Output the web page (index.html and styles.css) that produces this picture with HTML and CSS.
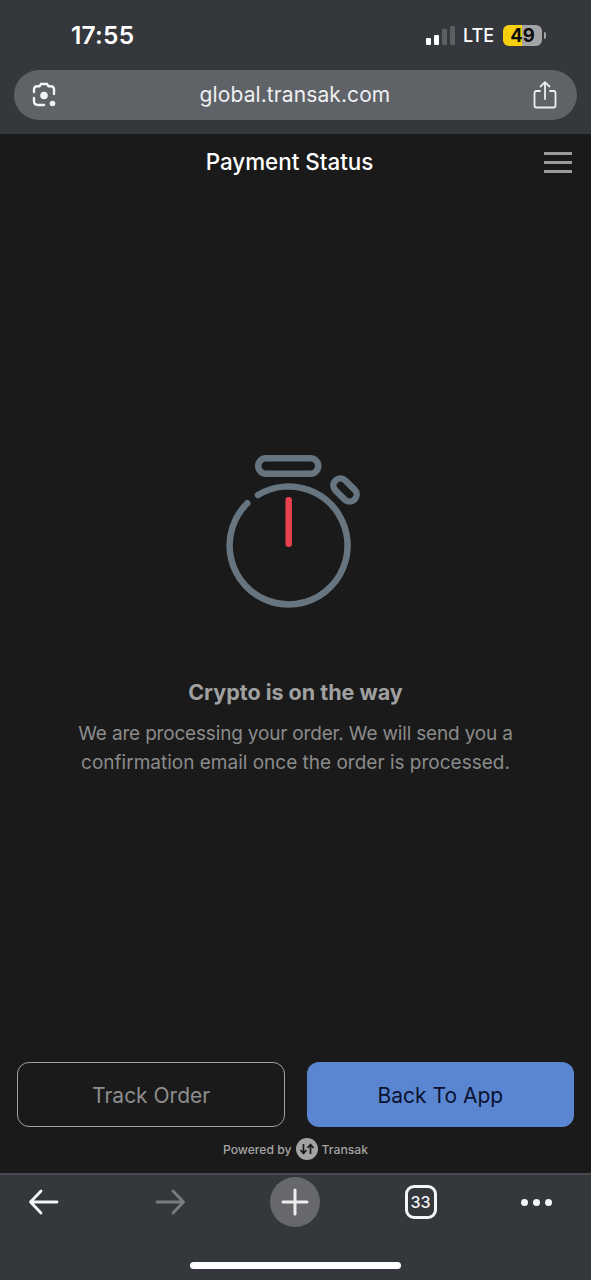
FILE: index.html
```html
<!DOCTYPE html>
<html lang="en">
<head>
  <meta charset="UTF-8">
  <meta name="viewport" content="width=device-width, initial-scale=1.0">
  <title>Payment Status</title>
  <link rel="stylesheet" href="styles.css">
</head>
<body>
  <!-- Phone status bar and browser address bar -->
  <div class="top-chrome">
    <div class="status-bar">
      <span class="clock">17:55</span>
      <div class="status-right">
        <div class="signal">
          <i class="bar bar-1 on"></i>
          <i class="bar bar-2 on"></i>
          <i class="bar bar-3"></i>
          <i class="bar bar-4"></i>
        </div>
        <span class="lte">LTE</span>
        <div class="battery"><span>49</span></div>
        <i class="battery-tip"></i>
      </div>
    </div>
    <div class="url-bar">
      <svg class="url-icon" width="28" height="28" viewBox="0 0 28 28" fill="none" stroke="#f2f3f4" stroke-width="2.4" stroke-linecap="round">
        <path d="M4 11V8.5C4 6.5 5.3 5.2 7.3 5.2H9.5L11 3H17L18.5 5.2H20.7C22.7 5.2 24 6.5 24 8.5V13"/>
        <path d="M4 17V20C4 22.3 5.5 24 7.8 24H14"/>
        <circle cx="14" cy="14.5" r="3.8" fill="#f2f3f4" stroke="none"/>
        <circle cx="22.5" cy="22.5" r="2.8" fill="#f2f3f4" stroke="none"/>
      </svg>
      <span class="url-text">global.transak.com</span>
      <svg class="url-icon" width="26" height="30" viewBox="0 0 26 30" fill="none" stroke="#eceef0" stroke-width="1.8" stroke-linecap="round" stroke-linejoin="round">
        <path d="M8 11H4.5C3 11 2.5 11.8 2.5 13V25.5C2.5 26.8 3.2 27.5 4.5 27.5H21.5C22.8 27.5 23.5 26.8 23.5 25.5V13C23.5 11.8 22.8 11 21.5 11H18"/>
        <path d="M13 19V2.5M8.5 6.5L13 2.2L17.5 6.5"/>
      </svg>
    </div>
  </div>

  <main class="page">
    <header class="page-head">
      <h1>Payment Status</h1>
      <div class="burger"><i></i><i></i><i></i></div>
    </header>

    <section class="status">
      <svg class="stopwatch" width="140" height="160" viewBox="0 0 140 160" fill="none" stroke="#66757f" stroke-width="6.5" stroke-linecap="round">
        <rect x="38.25" y="8.25" width="60" height="15.5" rx="7.75"/>
        <rect x="-13.5" y="-7" width="27" height="14" rx="7" transform="translate(125 40) rotate(45)"/>
        <path d="M38 45A59 59 0 1 1 27.3 53.3"/>
        <path d="M68.7 50.25V93.75" stroke="#e8414f"/>
      </svg>
      <h2>Crypto is on the way</h2>
      <p>We are processing your order. We will send you a<br><span class="line-2">confirmation email once the order is processed.</span></p>
    </section>

    <div class="actions">
      <button class="btn btn-outline">Track Order</button>
      <button class="btn btn-primary">Back To App</button>
    </div>
    <div class="powered">
      <span>Powered by</span>
      <svg width="22" height="22" viewBox="0 0 22 22" fill="none" stroke="#1a1a1a" stroke-width="1.7">
        <circle cx="11" cy="11" r="11" fill="#a3a3a3" stroke="none"/>
        <path d="M7.5 6V15.5M4.5 12L7.5 15.5L10.5 12"/>
        <path d="M14.5 16V6.5M11.5 10L14.5 6.5L17.5 10"/>
      </svg>
      <span>Transak</span>
    </div>
  </main>

  <!-- Browser bottom toolbar -->
  <div class="bottom-chrome">
    <div class="toolbar">
      <svg width="32" height="28" viewBox="0 0 32 28" fill="none" stroke="#f4f5f6" stroke-width="2.8" stroke-linecap="round" stroke-linejoin="round">
        <path d="M2.5 14H29M13 3L2.5 14L13 25"/>
      </svg>
      <svg class="forward" width="32" height="28" viewBox="0 0 32 28" fill="none" stroke="#7a7c80" stroke-width="2.8" stroke-linecap="round" stroke-linejoin="round">
        <path d="M29.5 14H3M19 3L29.5 14L19 25"/>
      </svg>
      <div class="new-tab">
        <svg width="28" height="28" viewBox="0 0 28 28" stroke="#eceded" stroke-width="3" stroke-linecap="round">
          <path d="M14 2V26M2 14H26"/>
        </svg>
      </div>
      <div class="tabs">33</div>
      <div class="more"><i></i><i></i><i></i></div>
    </div>
    <div class="home-bar"></div>
  </div>
</body>
</html>
```

FILE: styles.css
```css
/* Basic styling */
* {
  box-sizing: border-box;
}
body {
  margin: 0;
  width: 591px;
  height: 1280px;
  display: flex;
  flex-direction: column;
  background: #1a1a1a;
  overflow: hidden;
  font-family: Inter, "Noto Sans", sans-serif;
}

/* Status bar + address bar */
.top-chrome {
  height: 134px;
  padding: 0 14px;
  background: #34373c;
}
.status-bar {
  height: 70px;
  display: flex;
  justify-content: space-between;
  align-items: center;
  padding: 0 31px 0 57px;
}
.clock {
  color: #fff;
  font-size: 24.5px;
  font-weight: 600;
  letter-spacing: 0.2px;
}
.status-right {
  display: flex;
  align-items: center;
  padding-top: 1px;
}
.signal {
  display: flex;
  align-items: flex-end;
  gap: 3px;
  height: 19px;
  margin-right: 8px;
}
.bar {
  width: 5px;
  border-radius: 1px;
  background: #5b5e62;
}
.bar.on {
  background: #fff;
}
.bar-1 { height: 7px; }
.bar-2 { height: 10px; }
.bar-3 { height: 16px; }
.bar-4 { height: 19px; }
.lte {
  color: #fff;
  font-size: 18px;
  font-weight: 500;
  margin-right: 9px;
}
.battery {
  width: 39px;
  height: 21px;
  border-radius: 6px;
  background: linear-gradient(90deg, #f7cf0d 0 49%, #a4a4a4 49%);
  color: #0c0c0c;
  font-size: 18.5px;
  font-weight: 700;
  line-height: 21px;
  text-align: center;
}
.battery-tip {
  width: 2px;
  height: 7px;
  margin-left: 2px;
  border-radius: 0 2px 2px 0;
  background: #a4a4a4;
}
.url-bar {
  height: 50px;
  display: flex;
  justify-content: space-between;
  align-items: center;
  padding: 0 19px 0 16px;
  border-radius: 25px;
  background: #5f6267;
}
.url-text {
  color: #eef0f1;
  font-size: 21px;
  letter-spacing: 0.1px;
  margin-bottom: 1px;
}

/* Page body */
.page {
  flex: 1;
  display: flex;
  flex-direction: column;
  background: #1a1a1a;
}
.page-head {
  height: 56px;
  position: relative;
  display: flex;
  justify-content: center;
  align-items: center;
  padding: 0 12px 2px 0;
}
h1 {
  margin: 0;
  color: #fff;
  font-size: 22.4px;
  font-weight: 500;
}
.burger {
  position: absolute;
  top: 18px;
  right: 19px;
  width: 28px;
  display: flex;
  flex-direction: column;
  gap: 6px;
}
.burger i {
  height: 3px;
  background: #9c9c9c;
}
.status {
  flex: 1;
  display: flex;
  flex-direction: column;
  align-items: center;
  padding-top: 260px;
}
.stopwatch {
  margin-left: -11px;
  margin-bottom: 68px;
}
h2 {
  margin: 0 0 13px;
  color: #a0a0a0;
  font-size: 21.5px;
  font-weight: 700;
  line-height: 28px;
}
.status p {
  margin: 0;
  color: #8b8b8b;
  font-size: 19px;
  letter-spacing: -0.18px;
  line-height: 29px;
  text-align: center;
}
.line-2 {
  letter-spacing: 0;
}
.actions {
  display: flex;
  gap: 22px;
  padding: 0 17.5px 0 17px;
}
.btn {
  flex: 1;
  height: 65px;
  padding-top: 2px;
  border-radius: 12px;
  font-family: inherit;
  font-size: 21px;
}
.btn-outline {
  border: 1.5px solid #a1a1a1;
  background: transparent;
  color: #8e8e8e;
}
.btn-primary {
  border: none;
  background: #5a85d1;
  color: #0a1230;
}
.powered {
  height: 46px;
  padding-bottom: 2px;
  display: flex;
  justify-content: center;
  align-items: center;
  gap: 4px;
  color: #a3a3a3;
  font-size: 12.2px;
  font-weight: 500;
}

/* Bottom toolbar */
.bottom-chrome {
  height: 107px;
  border-top: 2px solid #46494d;
  background: #34373c;
  display: flex;
  flex-direction: column;
  align-items: center;
}
.toolbar {
  width: 100%;
  height: 82px;
  padding: 0 0 28px 28px;
  display: flex;
  align-items: center;
  gap: 84.5px;
}
.forward {
  margin-left: 9px;
}
.new-tab {
  width: 50px;
  height: 50px;
  display: flex;
  justify-content: center;
  align-items: center;
  border-radius: 50%;
  background: #66686c;
}
.tabs {
  width: 32px;
  height: 34px;
  border: 3px solid #f4f5f6;
  border-radius: 9px;
  color: #f4f5f6;
  font-size: 16px;
  font-weight: 500;
  line-height: 29px;
  text-align: center;
}
.more {
  display: flex;
  gap: 5px;
}
.more i {
  width: 7px;
  height: 7px;
  border-radius: 50%;
  background: #f4f5f6;
}
.home-bar {
  width: 211px;
  height: 7px;
  margin-top: 5px;
  margin-right: 1px;
  border-radius: 4px;
  background: #fff;
}
```
